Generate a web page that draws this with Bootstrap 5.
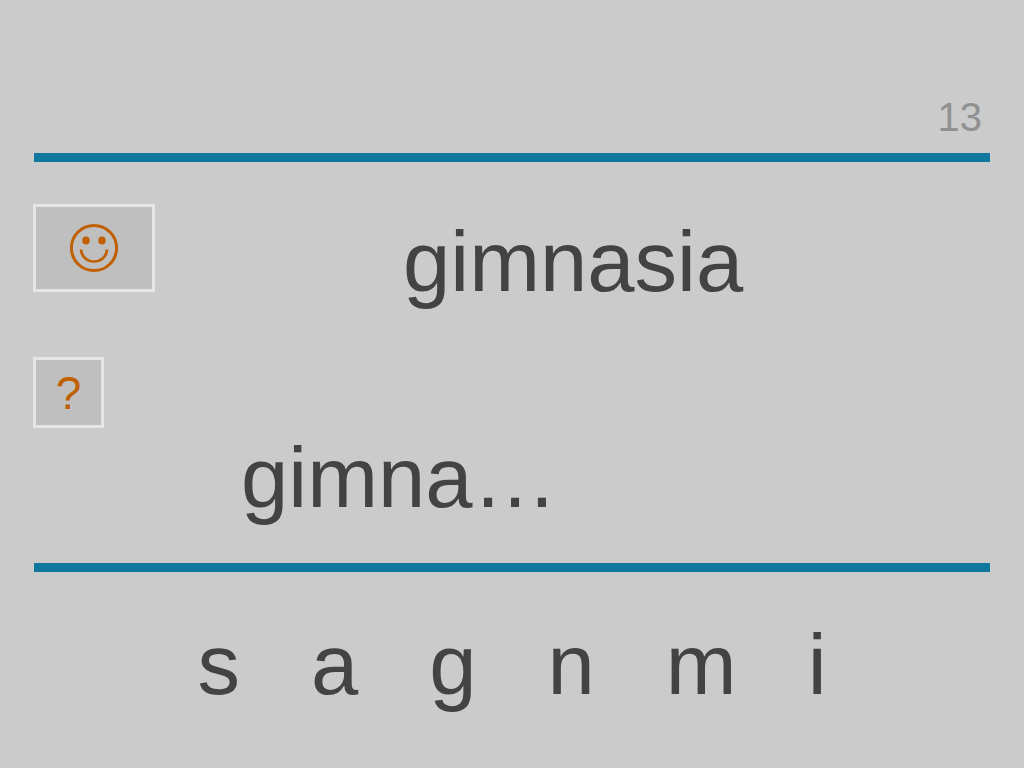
<!DOCTYPE html>
<html lang="es">
<head>
<meta charset="utf-8">
<meta name="viewport" content="width=device-width, initial-scale=1">
<title>gimnasia</title>
<link href="https://cdn.jsdelivr.net/npm/bootstrap@5.3.0/dist/css/bootstrap.min.css" rel="stylesheet">
<style>
body { background: #cbcbcb; color: #434343; font-family: "Liberation Sans", Arial, sans-serif; }
.slide { padding: 0 34px; }
.slide-head { padding: 93px 8px 12px 0; }
.counter { font-size: 40px; line-height: 48px; color: #919191; }
.rule { height: 9px; background: #10789c; }
.big-text { font-size: 85px; line-height: 100px; }
.play-area { padding: 42px 0 35px; margin-left: -1px; }
.word-row { min-height: 153px; }
.key { background: #bfbfbf; border: 3px solid #e6e6e6; color: #c06000; padding: 0; }
.key-face { width: 122px; height: 88px; }
.key-help { width: 71px; height: 71px; padding-top: 1px; font-size: 46px; line-height: 60px; }
.word { margin-left: 248px; padding-top: 8px; }
.attempt { margin-left: 137px; padding-top: 71px; }
.letters { gap: 71px; padding-top: 43px; }
</style>
</head>
<body>
<main class="slide">
  <header class="slide-head d-flex justify-content-end"><span class="counter">13</span></header>
  <div class="rule"></div>
  <section class="play-area">
    <div class="word-row d-flex align-items-start">
      <button type="button" class="key key-face d-flex align-items-center justify-content-center" aria-label="Correcto">
        <svg width="50" height="50" viewBox="0 0 50 50" aria-hidden="true"><circle cx="25" cy="25" r="22.6" fill="none" stroke="currentColor" stroke-width="3"/><ellipse cx="17" cy="17.5" rx="3.7" ry="4" fill="currentColor"/><ellipse cx="33" cy="17.5" rx="3.7" ry="4" fill="currentColor"/><path d="M12 26.500C13 42.500 37 42.500 38 26.500" fill="none" stroke="currentColor" stroke-width="2.7"/></svg>
      </button>
      <h1 class="big-text word fw-normal mb-0">gimnasia</h1>
    </div>
    <div class="d-flex align-items-start">
      <button type="button" class="key key-help" aria-label="Ayuda">?</button>
      <div class="big-text attempt">gimna…</div>
    </div>
  </section>
  <div class="rule"></div>
  <div class="letters big-text d-flex justify-content-center"><span>s</span><span>a</span><span>g</span><span>n</span><span>m</span><span>i</span></div>
</main>
<script src="https://cdn.jsdelivr.net/npm/bootstrap@5.3.0/dist/js/bootstrap.bundle.min.js"></script>
</body>
</html>
